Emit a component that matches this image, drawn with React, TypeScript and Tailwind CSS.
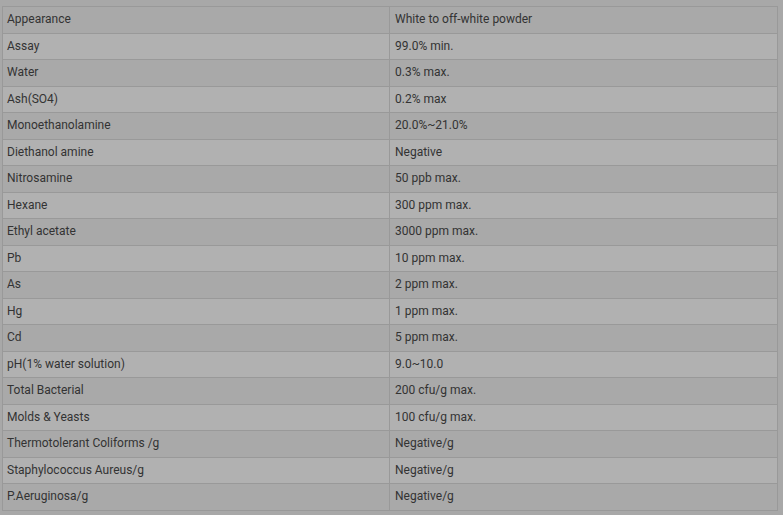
const rows: [string, string][] = [
  ["Appearance", "White to off-white powder"],
  ["Assay", "99.0% min."],
  ["Water", "0.3% max."],
  ["Ash(SO4)", "0.2% max"],
  ["Monoethanolamine", "20.0%~21.0%"],
  ["Diethanol amine", "Negative"],
  ["Nitrosamine", "50 ppb max."],
  ["Hexane", "300 ppm max."],
  ["Ethyl acetate", "3000 ppm max."],
  ["Pb", "10 ppm max."],
  ["As", "2 ppm max."],
  ["Hg", "1 ppm max."],
  ["Cd", "5 ppm max."],
  ["pH(1% water solution)", "9.0~10.0"],
  ["Total Bacterial", "200 cfu/g max."],
  ["Molds & Yeasts", "100 cfu/g max."],
  ["Thermotolerant Coliforms /g", "Negative/g"],
  ["Staphylococcus Aureus/g", "Negative/g"],
  ["P.Aeruginosa/g", "Negative/g"],
];

export default function App() {
  return (
    <div className="w-[783px] h-[515px] bg-[#a8a8a8] pt-[6px] pl-[2px] font-['Roboto',sans-serif] text-[12px] text-[#333]">
      <table className="w-[776px] border-collapse border border-[#999]">
        <tbody>
          {rows.map(([k, v], i) => (
            <tr key={k} className={i % 2 === 0 ? "bg-[#a9a9a9]" : "bg-[#b1b1b1]"}>
              <td className="w-[387px] border border-[#999] pl-[4px] h-[26.5px] leading-[18px] pt-0 pb-[1px]">{k}</td>
              <td className="border border-[#999] pl-[5px] h-[26.5px] leading-[18px] pt-0 pb-[1px]">{v}</td>
            </tr>
          ))}
        </tbody>
      </table>
    </div>
  );
}
